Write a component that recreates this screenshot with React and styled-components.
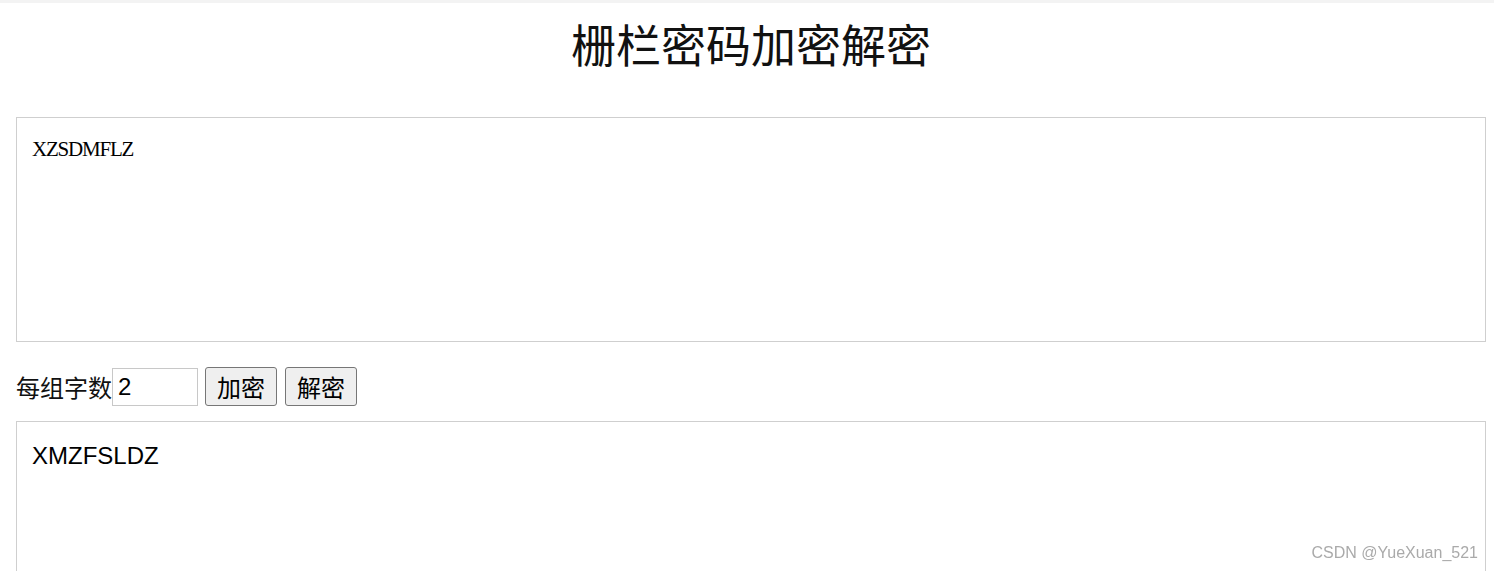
import React, { useState } from "react";
import styled, { createGlobalStyle } from "styled-components";

const Global = createGlobalStyle`
  html, body {
    margin: 0;
    padding: 0;
    overflow: hidden;
    background: #fff;
  }
  body {
    border-top: 3px solid #f3f3f3;
    font-family: "Liberation Sans", "Noto Sans CJK SC", sans-serif;
    color: #000;
  }
`;

const Page = styled.div`
  padding: 0 8px 0 16px;
  display: flex;
  flex-direction: column;
`;

const Title = styled.h1`
  margin: 11px 0 43px;
  font-family: "Noto Sans CJK SC", sans-serif;
  font-weight: 400;
  font-size: 45px;
  line-height: 60px;
  text-align: center;
  color: #111;
`;

const Area = styled.textarea`
  display: block;
  box-sizing: border-box;
  width: 100%;
  height: 225px;
  margin: 0;
  padding: ${(p) => (p.$sans ? "20px 15px" : "19px 15px")};
  border: 1px solid #cfcfcf;
  border-radius: 0;
  resize: none;
  outline: none;
  color: #000;
  font-family: ${(p) =>
    p.$sans
      ? `"Liberation Sans", "Noto Sans CJK SC", sans-serif`
      : `"Liberation Serif", serif`};
  font-size: ${(p) => (p.$sans ? "24px" : "21px")};
  letter-spacing: ${(p) => (p.$sans ? "0" : "-1.2px")};
  line-height: 1.2;
`;

const Controls = styled.div`
  display: flex;
  align-items: center;
  margin: 25px 0 15px;
  height: 39px;
`;

const Label = styled.span`
  font-family: "Noto Sans CJK SC", sans-serif;
  font-size: 24px;
  line-height: 39px;
  color: #111;
`;

const NumInput = styled.input`
  box-sizing: border-box;
  width: 86px;
  height: 38px;
  margin: 0 7px 0 0;
  padding: 0 5px;
  border: 1px solid #c8c8c8;
  border-radius: 0;
  outline: none;
  font-family: "Liberation Sans", sans-serif;
  font-size: 24px;
  color: #000;
`;

const Button = styled.button`
  box-sizing: border-box;
  height: 39px;
  margin: 0 8px 0 0;
  padding: 0 11px;
  border: 1px solid #767676;
  border-radius: 3px;
  background: #efefef;
  font-family: "Noto Sans CJK SC", sans-serif;
  font-size: 24px;
  line-height: 1;
  color: #000;
  cursor: pointer;
`;

const Watermark = styled.div`
  position: fixed;
  right: 16px;
  bottom: 9px;
  font-family: "Liberation Sans", sans-serif;
  font-size: 16px;
  color: #aaa;
  pointer-events: none;
`;

function railEncrypt(text, n) {
  const k = Math.max(1, parseInt(n, 10) || 1);
  const rows = Array.from({ length: k }, () => "");
  for (let i = 0; i < text.length; i++) rows[i % k] += text[i];
  return rows.join("");
}

export default function App() {
  const [input, setInput] = useState("XZSDMFLZ");
  const [n, setN] = useState("2");
  const [output, setOutput] = useState("XMZFSLDZ");

  return (
    <>
      <Global />
      <Page>
        <Title>栅栏密码加密解密</Title>
        <Area value={input} onChange={(e) => setInput(e.target.value)} />
        <Controls>
          <Label>每组字数</Label>
          <NumInput value={n} onChange={(e) => setN(e.target.value)} />
          <Button onClick={() => setOutput(railEncrypt(input, n))}>加密</Button>
          <Button onClick={() => setOutput(input)}>解密</Button>
        </Controls>
        <Area $sans value={output} onChange={(e) => setOutput(e.target.value)} />
      </Page>
      <Watermark>CSDN @YueXuan_521</Watermark>
    </>
  );
}
